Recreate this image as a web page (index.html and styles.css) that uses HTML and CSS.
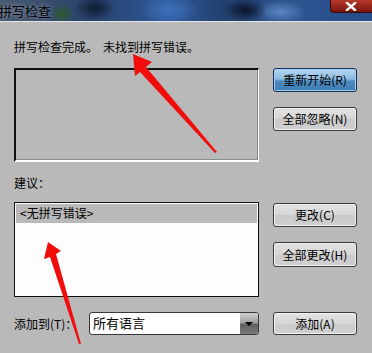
FILE: index.html
```html
<!DOCTYPE html>
<html>
<head>
  <meta charset="UTF-8">
  <title>拼写检查</title>
  <link rel="stylesheet" href="styles.css">
</head>
<body>
  <div class="titlebar">
    <span class="title">拼写检查</span>
    <span class="close">
      <svg width="12" height="9" viewBox="0 0 12 9"><path d="M2 1 L10 8 M10 1 L2 8" stroke="#fff" stroke-width="2.4" stroke-linecap="square"/></svg>
    </span>
  </div>
  <div class="content">
    <div class="status">拼写检查完成。<span class="status-msg">未找到拼写错误。</span></div>
    <div class="row row-top">
      <div class="preview"></div>
      <div class="buttons">
        <button type="button" class="btn default">重新开始(R)</button>
        <button type="button" class="btn">全部忽略(N)</button>
      </div>
    </div>
    <div class="label">建议：</div>
    <div class="row row-list">
      <div class="list">
        <div class="item selected">&lt;无拼写错误&gt;</div>
      </div>
      <div class="buttons list-buttons">
        <button type="button" class="btn">更改(C)</button>
        <button type="button" class="btn">全部更改(H)</button>
      </div>
    </div>
    <div class="row row-bottom">
      <div class="add-to">
        <span class="add-label">添加到(T)：</span>
        <div class="combo">
          <span class="combo-text">所有语言</span>
          <span class="combo-arrow"></span>
        </div>
      </div>
      <button type="button" class="btn">添加(A)</button>
    </div>
  </div>
  <!-- Markierungspfeile über dem Dialog -->
  <svg class="arrows" width="372" height="353" viewBox="0 0 372 353">
    <polygon points="133,54 152,62 146,67 217,152 215,153 140,72 135,76" fill="#f20d0d"/>
    <polygon points="48,242 61,251 56,254 81,344 79,344 50,257 44,259" fill="#f20d0d"/>
  </svg>
</body>
</html>
```
FILE: styles.css
```css
body { margin: 0; width: 372px; height: 353px; overflow: hidden; position: relative; background: #b9b9b9; font-family: "Noto Sans CJK SC", "Liberation Sans", sans-serif; font-size: 12px; color: #000; }
.titlebar { height: 21px; border-bottom: 1px solid #e6e6e6; position: relative; display: flex; align-items: center;
  background:
    radial-gradient(ellipse 12px 10px at 62px 14px, #2c5a2c 0%, rgba(44,90,44,0) 100%),
    radial-gradient(ellipse 30px 14px at 170px 10px, #3e6fb8 0%, rgba(62,111,184,0) 100%),
    radial-gradient(ellipse 20px 12px at 95px 8px, #0f1c33 0%, rgba(15,28,51,0) 100%),
    radial-gradient(ellipse 22px 12px at 245px 10px, #0a1428 0%, rgba(10,20,40,0) 100%),
    radial-gradient(ellipse 26px 12px at 280px 12px, #5a86c4 0%, rgba(90,134,196,0) 100%),
    linear-gradient(90deg, #4a5a70 0%, #28416a 25%, #2f5a9c 45%, #22406e 60%, #2e5590 80%, #244c8a 100%); }
.title { font-size: 13px; line-height: 21px; margin-left: -1px; color: #000; text-shadow: 0 0 4px rgba(200,210,230,0.7); }
.close { position: absolute; right: -4px; top: 0; width: 46px; height: 13px; box-sizing: border-box; background: linear-gradient(#b53a2a, #7a140c); border: 1px solid #3a0a06; border-top: none; border-radius: 0 0 0 4px; display: flex; align-items: center; justify-content: center; }
.close svg { display: block; margin-left: -4px; }
.content { padding: 17px 15px 0 14px; }
.status { line-height: 16px; height: 16px; }
.status-msg { margin-left: 5px; }
.row { display: flex; gap: 14px; }
.row-top { margin-top: 13px; }
.preview { width: 245px; height: 94px; box-sizing: border-box; background: #b9b9b9; border: 2px solid #111; border-right: 1px solid #fff; border-bottom: 2px solid #fff; box-shadow: inset -1px -1px 0 #8a8a8a; }
.buttons { display: flex; flex-direction: column; gap: 15px; }
.btn { width: 84px; height: 24px; box-sizing: border-box; padding: 0; border: 1px solid #3a3a3a; border-radius: 3px; background: linear-gradient(#e2e2e2, #d6d6d6 50%, #cacaca 51%, #d0d0d0); box-shadow: inset 0 0 0 1px #f0f0f0; font-family: "Noto Sans CJK SC", "Liberation Sans", sans-serif; font-size: 12px; color: #000; line-height: 20px; }
.btn.default { border-color: #14305a; background: linear-gradient(#b6d6ee, #8ebde4 45%, #4e8ac0 55%, #3f7cb4); box-shadow: inset 0 0 0 1px #9fd0f4; }
.label { margin-top: 13px; line-height: 16px; }
.row-list { margin-top: 11px; }
.list { width: 245px; height: 95px; box-sizing: border-box; background: #fdfdfd; border: 1px solid #111; padding: 1px; }
.item { height: 19px; line-height: 18px; padding-left: 4px; }
.item.selected { background: #b9b9b9; }
.list-buttons { padding-top: 1px; gap: 15px; }
.list-buttons .btn:last-child { height: 25px; }
.row-bottom { margin-top: 15px; align-items: center; }
.add-to { width: 245px; display: flex; align-items: center; justify-content: space-between; }
.add-label { line-height: 16px; }
.combo { width: 170px; height: 23px; box-sizing: border-box; border: 1px solid #3a3a3a; border-radius: 3px; background: #fff; display: flex; overflow: hidden; }
.combo-text { flex: 1; padding-left: 3px; line-height: 20px; font-size: 13px; }
.combo-arrow { width: 18px; background: linear-gradient(#d0d0d0, #a0a0a0 45%, #606060 55%, #7a7a7a); position: relative; }
.combo-arrow::after { content: ""; position: absolute; left: 5px; top: 9px; border-left: 4px solid transparent; border-right: 4px solid transparent; border-top: 4px solid #000; }
.row-bottom .btn { height: 23px; }
.arrows { position: absolute; left: 0; top: 0; pointer-events: none; }
```
